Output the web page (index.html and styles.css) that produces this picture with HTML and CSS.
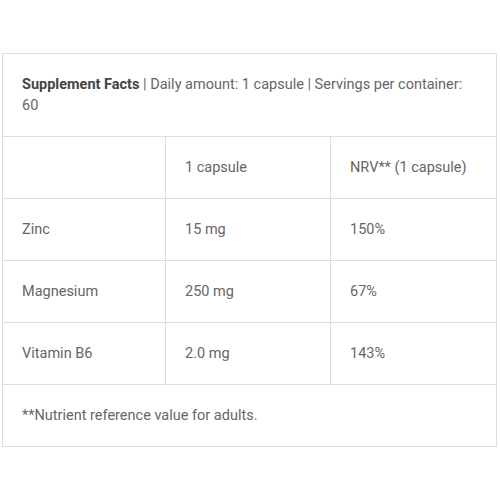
FILE: index.html
```html
<!DOCTYPE html>
<html>
<head>
<meta charset="utf-8">
<link rel="stylesheet" href="styles.css">
</head>
<body>
<div class="wrap">
<table class="facts">
  <colgroup><col class="c1"><col class="c2"><col class="c3"></colgroup>
  <tr><td colspan="3" class="head"><strong>Supplement Facts</strong> | Daily amount: 1 capsule | Servings per container: 60</td></tr>
  <tr><td></td><td>1 capsule</td><td>NRV** (1 capsule)</td></tr>
  <tr><td>Zinc</td><td>15 mg</td><td>150%</td></tr>
  <tr><td>Magnesium</td><td>250 mg</td><td>67%</td></tr>
  <tr><td>Vitamin B6</td><td>2.0 mg</td><td>143%</td></tr>
  <tr><td colspan="3">**Nutrient reference value for adults.</td></tr>
</table>
</div>
</body>
</html>
```

FILE: styles.css
```css
html, body { margin: 0; padding: 0; background: #fff; }
.wrap { padding: 53px 4px 0 2px; }
.facts {
  width: 494px;
  border-collapse: collapse;
  table-layout: fixed;
  font-family: Roboto, "Liberation Sans", sans-serif;
  font-size: 14.5px;
  line-height: 21px;
  color: #666;
}
.c1 { width: 163px; }
.c2 { width: 165px; }
.c3 { width: 166px; }
.facts td {
  border: 1px solid #dcdcdc;
  padding: 20px 19px 20px 19px;
  vertical-align: middle;
}
.facts .head { padding-right: 25px; }
.facts strong { font-weight: 700; color: #444; }
```
